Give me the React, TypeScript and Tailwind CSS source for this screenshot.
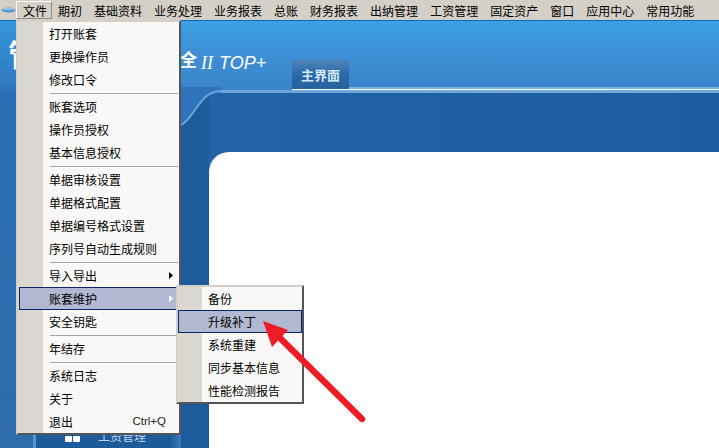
const menuBar = ["期初", "基础资料", "业务处理", "业务报表", "总账", "财务报表", "出纳管理", "工资管理", "固定资产", "窗口", "应用中心", "常用功能"];

type Entry = { label: string; hot?: boolean; arrow?: boolean; shortcut?: string } | "sep";

const fileMenu: Entry[] = [
  { label: "打开账套" },
  { label: "更换操作员" },
  { label: "修改口令" },
  "sep",
  { label: "账套选项" },
  { label: "操作员授权" },
  { label: "基本信息授权" },
  "sep",
  { label: "单据审核设置" },
  { label: "单据格式配置" },
  { label: "单据编号格式设置" },
  { label: "序列号自动生成规则" },
  "sep",
  { label: "导入导出", arrow: true },
  { label: "账套维护", arrow: true, hot: true },
  { label: "安全钥匙" },
  "sep",
  { label: "年结存" },
  "sep",
  { label: "系统日志" },
  { label: "关于" },
  { label: "退出", shortcut: "Ctrl+Q" },
];

const subMenu: Entry[] = [
  { label: "备份" },
  { label: "升级补丁", hot: true },
  { label: "系统重建" },
  { label: "同步基本信息" },
  { label: "性能检测报告" },
];

const Menu = ({ items, className, strip, rowClass }: { items: Entry[]; className: string; strip: string; rowClass: string }) => (
  <div className={`absolute z-10 flex flex-col border-2 border-t-[#d4d0c8] border-l-[#d4d0c8] border-r-[#555] border-b-[#555] bg-[#f9f8f7] ${className}`}>
    <div className={`absolute left-0 top-0 bottom-0 bg-[#dbd8d1] ${strip}`} />
    {items.map((item, i) =>
      item === "sep" ? (
        <div key={i} className="relative h-[4px] shrink-0 pl-[32px] pr-[1px] flex items-center">
          <div className="h-[1px] w-full bg-[#a6a6a6]" />
        </div>
      ) : (
        <div
          key={i}
          className={`relative h-[23px] shrink-0 flex items-center pr-[12px] border ${rowClass} ${item.hot ? "bg-[#b0b9d1] border-[#0a246a]" : "border-transparent"}`}
        >
          <span>{item.label}</span>
          {item.shortcut && <span className="ml-auto text-[11.5px] text-[#222] font-['Liberation_Sans',sans-serif]">{item.shortcut}</span>}
          {item.arrow && (
            <svg className="absolute right-[5px] top-[7px]" width="4" height="7" viewBox="0 0 4 7">
              <path d="M0 0 L4 3.5 L0 7 Z" fill={item.hot ? "#ffffff" : "#000000"} />
            </svg>
          )}
        </div>
      )
    )}
  </div>
);

export default function App() {
  return (
    <div className="relative w-[719px] h-[448px] overflow-hidden flex flex-col text-[12px] leading-none text-black font-['Noto_Sans_CJK_SC','Liberation_Sans',sans-serif]">
      <div className="h-[20px] shrink-0 flex items-center bg-[#d4d0c8]">
        <svg className="ml-[1px]" width="15" height="8" viewBox="0 0 15 8">
          <ellipse cx="7.5" cy="4" rx="7" ry="2.5" fill="#4f97d6" />
          <path d="M2 3 H13" stroke="#e8eef5" strokeWidth="1" />
        </svg>
        <div className="h-[18px] flex items-center pt-[1px] pl-[6px] pr-[4px] border border-t-white border-l-white border-b-[#8e8c86] border-r-[#8e8c86]">文件</div>
        <div className="flex pt-[1px]">
          {menuBar.map((m) => (
            <div key={m} className="px-[6px] whitespace-nowrap">{m}</div>
          ))}
        </div>
      </div>
      <div className="h-[1px] shrink-0 bg-[#0f6db5]" />

      <div className="h-[66px] shrink-0 relative bg-gradient-to-b from-[#3ba0e1] via-[#3e8fd6] to-[#3a85cb]">
        <div className="absolute left-0 top-0 bottom-0 w-[16px] bg-gradient-to-b from-[#3597dc] to-[#2f78bf]" />
        <div className="absolute left-[8px] top-[17px] text-[30px] font-bold text-white">管</div>
        <div className="absolute left-[180px] top-[29px] flex items-start text-white">
          <span className="text-[17px] font-bold">全</span>
          <span className="ml-[4px] pt-[4px] text-[18px] italic font-['Liberation_Serif',serif]">II</span>
          <span className="ml-[6px] pt-[4px] text-[18px] italic font-['Liberation_Sans',sans-serif]">TOP+</span>
        </div>
      </div>

      <div className="h-[6px] shrink-0 flex">
        <div className="w-[220px] bg-[#2f74ba]" />
        <div className="w-[72px] flex flex-col">
          <div className="h-[3px] bg-[#3a85cb]" />
          <div className="h-[3px] bg-[#6ba3dc]" />
        </div>
        <div className="flex-1 flex flex-col">
          <div className="h-[2px] bg-[#7fb3e2]" />
          <div className="h-[1px] bg-white" />
          <div className="h-[3px] bg-[#6fa8de]" />
        </div>
      </div>

      <div className="flex-1 flex bg-gradient-to-r from-[#2566aa] to-[#1c5c9f]">
        <div className="w-[33px] bg-gradient-to-b from-[#2a6fb5] to-[#2e6cab]" />
        <div className="w-[3px] bg-[#5b93cb]" />
        <div className="w-[134px] bg-[#1d5a9b]" />
        <div className="w-[11px] bg-gradient-to-r from-[#1d5a9b] to-[#3a80c0]" />
        <div className="w-[28px] bg-[#1e5b9c]" />
        <div className="flex-1 flex flex-col">
          <div className="h-[59px]" />
          <div className="flex-1 bg-white rounded-tl-[20px]" />
        </div>
      </div>

      {/* curve of the header down into the sidebar */}
      <svg className="absolute left-[178px] top-[88px]" width="44" height="40" viewBox="0 0 44 40">
        <path d="M0 38 C16 34 20 4 42 3 L44 3 L44 0 L0 0 Z" fill="#2f74ba" />
        <path d="M0 38 C16 34 20 4 42 3 L44 3" fill="none" stroke="#6ba3dc" strokeWidth="2" />
      </svg>

      <div className="absolute left-[292px] top-[60px] w-[57px] h-[30px] rounded-t-[3px] bg-gradient-to-b from-[#4f83b8] via-[#2a6aa9] to-[#27609f] flex items-center justify-center text-[13px] font-bold text-[#d5eafb] border-b border-white">主界面</div>

      <div className="absolute left-[65px] top-[436px] flex gap-[1px]">
        <div className="w-[7px] h-[6px] rounded-[1px] bg-white" />
        <div className="w-[7px] h-[6px] rounded-[1px] bg-white" />
      </div>
      <div className="absolute left-[98px] top-[430px] text-[12px] text-[#bcd6ef]">工资管理</div>

      <Menu items={fileMenu} className="left-[16px] top-[20px] w-[165px]" strip="w-[25px]" rowClass="pl-[29px] ml-[1px]" />
      <Menu items={subMenu} className="left-[176px] top-[285px] w-[128px]" strip="w-[24px]" rowClass="pl-[29px]" />

      <svg className="absolute z-20 left-[260px] top-[315px]" width="110" height="110" viewBox="0 0 110 110">
        <path d="M102 104 L19 22" stroke="#ee1c25" strokeWidth="6.5" strokeLinecap="round" />
        <path d="M3 6 L28 15 L12 32 Z" fill="#ee1c25" />
      </svg>
    </div>
  );
}
